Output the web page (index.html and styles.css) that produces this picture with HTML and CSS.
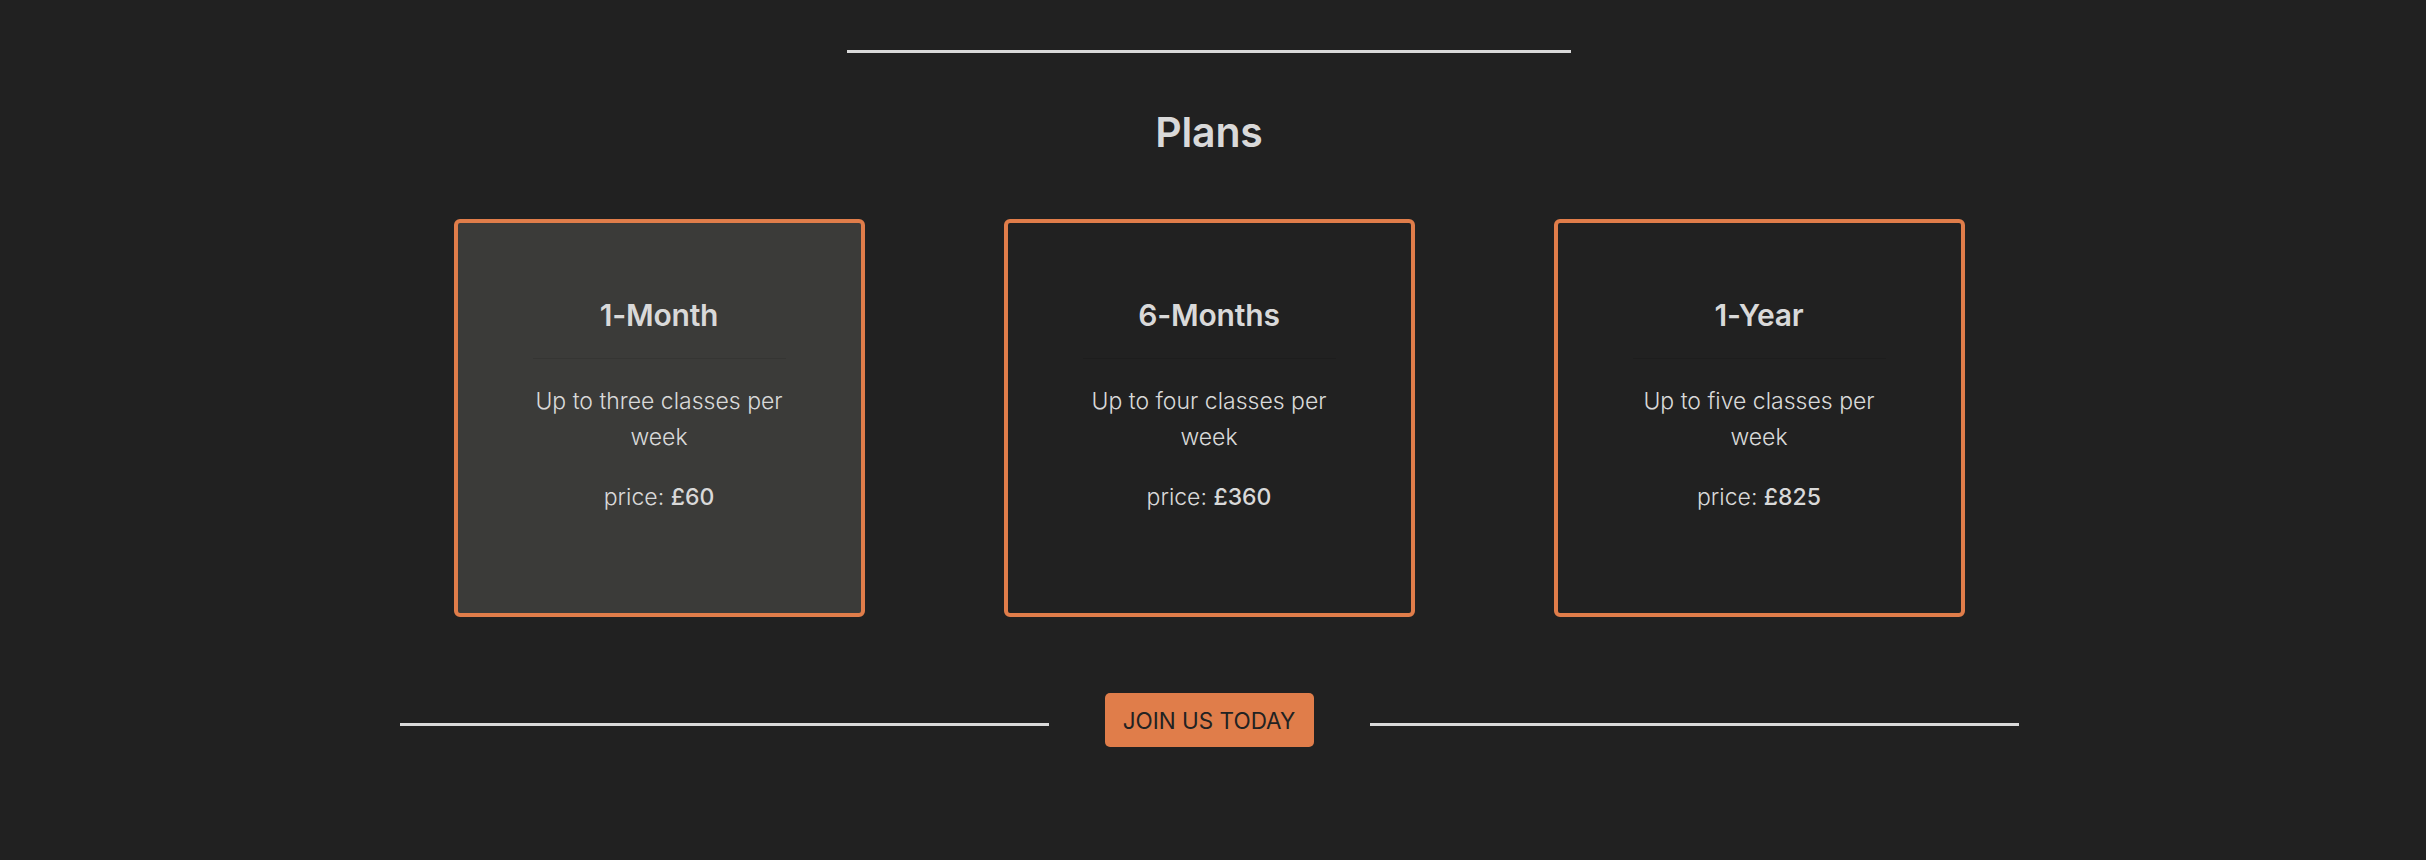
FILE: index.html
```html
<!DOCTYPE html>
<html lang="en">
<head>
<meta charset="utf-8">
<title>Plans</title>
<link rel="stylesheet" href="styles.css">
</head>
<body>
<main class="page">
  <hr class="top-rule">
  <h2 class="section-title">Plans</h2>
  <section class="plans">
    <article class="plan plan--active">
      <h3 class="plan-name">1-Month</h3>
      <p class="plan-desc">Up to three classes per week</p>
      <p class="plan-price">price: <strong>£60</strong></p>
    </article>
    <article class="plan">
      <h3 class="plan-name">6-Months</h3>
      <p class="plan-desc">Up to four classes per week</p>
      <p class="plan-price">price: <strong>£360</strong></p>
    </article>
    <article class="plan">
      <h3 class="plan-name">1-Year</h3>
      <p class="plan-desc">Up to five classes per week</p>
      <p class="plan-price">price: <strong>£825</strong></p>
    </article>
  </section>
  <div class="cta-row">
    <span class="cta-line"></span>
    <a class="cta-button" href="#">JOIN US TODAY</a>
    <span class="cta-line"></span>
  </div>
</main>
</body>
</html>
```
FILE: styles.css
```css
* { box-sizing: border-box; }

html, body {
  margin: 0;
  padding: 0;
  background: #212121;
}

body {
  font-family: Inter, "Noto Sans", "Liberation Sans", sans-serif;
  color: #d9d9d9;
  height: 860px;
  overflow: hidden;
}

.page {
  padding: 50px 8px 0 0;
  display: flex;
  flex-direction: column;
  align-items: center;
}

.top-rule {
  width: 724px;
  height: 3px;
  margin: 0;
  border: 0;
  background: #d9d9d9;
}

.section-title {
  margin: 55px 0 0;
  font-size: 41px;
  line-height: 49px;
  font-weight: 600;
  color: #d9d9d9;
  letter-spacing: -0.2px;
}

.plans {
  margin-top: 62px;
  display: flex;
  gap: 139px;
}

.plan {
  width: 411px;
  height: 398px;
  border: 4px solid #e07d4a;
  border-radius: 6px;
  padding: 74px 70px 0;
  text-align: center;
  background: #212121;
}

.plan--active {
  background: #3b3b39;
}

.plan-name {
  margin: 0 5px;
  padding-bottom: 25px;
  font-size: 30px;
  line-height: 36px;
  font-weight: 600;
  color: #d9d9d9;
  border-bottom: 1px solid rgba(0, 0, 0, 0.1);
  letter-spacing: -0.2px;
}

.plan-desc {
  margin: 24px 0 0;
  font-size: 23px;
  line-height: 36px;
  font-weight: 300;
}

.plan-price {
  margin: 24px 0 0;
  font-size: 23px;
  line-height: 36px;
  font-weight: 300;
}

.plan-price strong {
  font-weight: 500;
}

.cta-row {
  margin-top: 76px;
  display: flex;
  align-items: center;
  gap: 56px;
}

.cta-line {
  display: block;
  width: 649px;
  height: 3px;
  margin-top: 9px;
  background: #d9d9d9;
}

.cta-button {
  display: flex;
  align-items: center;
  justify-content: center;
  width: 209px;
  height: 54px;
  border-radius: 5px;
  background: #e07d4a;
  color: #222222;
  text-decoration: none;
  font-size: 22.5px;
  font-weight: 400;
}
```
